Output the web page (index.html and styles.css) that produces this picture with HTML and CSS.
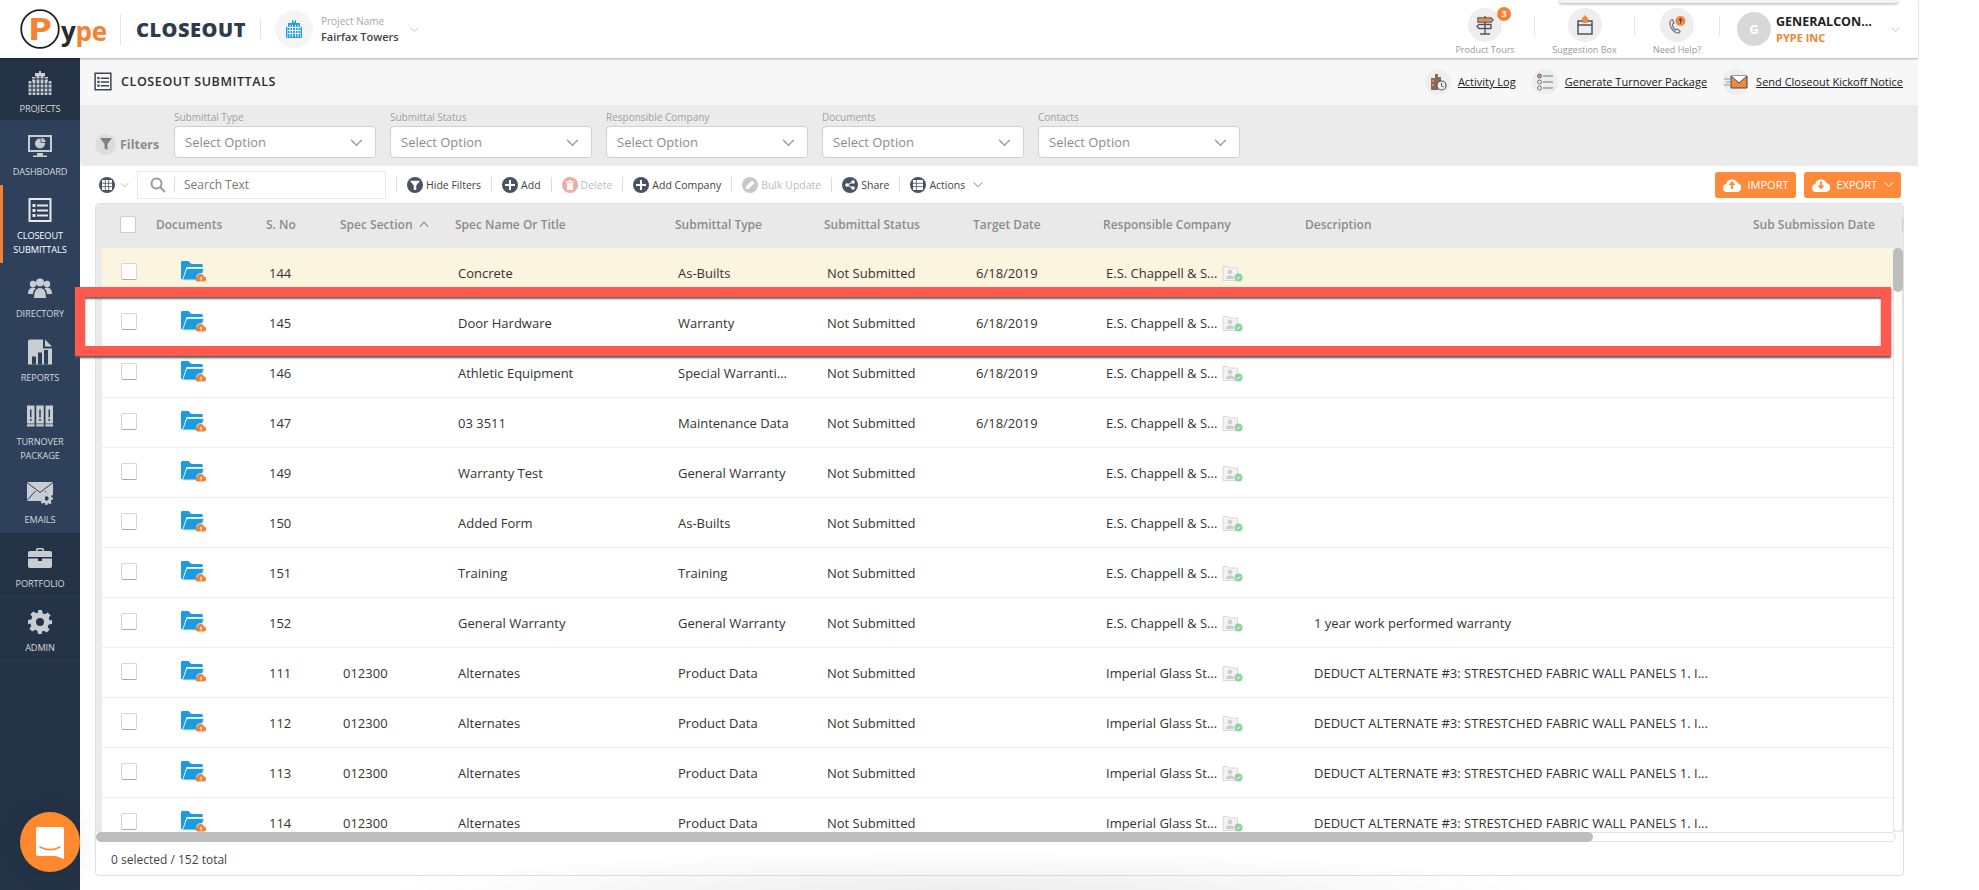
FILE: index.html
```html
<!DOCTYPE html>
<html lang="en">
<head>
<meta charset="utf-8">
<title>Closeout Submittals</title>
<link rel="stylesheet" href="styles.css">
</head>
<body>
<svg class="defs" width="0" height="0" aria-hidden="true">
  <symbol id="folder" viewBox="0 0 26 22">
    <path d="M0 1.500C0 .7.6 0 1.400 0h6l3 3h10c.8 0 1.400.6 1.400 1.400V6H5.500L2 18H0z" fill="#1e9ae0"/>
    <path d="M6.500 7.500H23L19.500 19H1.500L3 15 5 9z" fill="#1e9ae0" stroke="#d3ecfa" stroke-width="1"/>
    <circle cx="20" cy="17" r="5" fill="#fff" fill-opacity=".75"/>
    <path d="M16.500 20.500a2.400 2.400 0 0 1-.4-4.700 3.600 3.600 0 0 1 6.900-.4 2.600 2.600 0 0 1 .3 5.100z" fill="#f47f32"/>
    <path d="M20 15.500l1.500 2h-1v2h-1v-2h-1z" fill="#fff"/>
  </symbol>
  <symbol id="contact" viewBox="0 0 21 17">
    <path d="M1 1.500h5.500L8 3h7.500v12.500H1z" fill="#f3f3f3" stroke="#d8d8d8"/>
    <circle cx="8" cy="7" r="2.300" fill="#cdcdcd"/>
    <path d="M4 14c0-2.700 1.700-3.700 4-3.700s4 1 4 3.700z" fill="#cdcdcd"/>
    <circle cx="16.500" cy="12.500" r="4" fill="#8fd19e"/>
    <path d="M14.700 12.500l1.400 1.400 2.200-2.600" fill="none" stroke="#fff" stroke-width=".9"/>
  </symbol>
  <symbol id="chev" viewBox="0 0 12 8">
    <path d="M1 1.500l5 5 5-5" fill="none" stroke="currentColor" stroke-width="1.200"/>
  </symbol>
  <symbol id="gear" viewBox="0 0 24 24">
    <path fill="currentColor" fill-rule="evenodd" d="M10 0h4l.6 3.300 2.300 1 2.800-1.900 2.900 2.900-1.900 2.800 1 2.300L24 10v4l-3.300.6-1 2.300 1.900 2.800-2.900 2.900-2.800-1.900-2.300 1L14 24h-4l-.6-3.300-2.300-1-2.800 1.900-2.900-2.900 1.900-2.800-1-2.300L0 14v-4l3.300-.6 1-2.300-1.900-2.800 2.900-2.900 2.800 1.900 2.300-1zM12 8a4 4 0 1 0 0 8 4 4 0 0 0 0-8z"/>
  </symbol>
  <symbol id="checklist" viewBox="0 0 24 24">
    <path d="M1.500 1h21v22h-21z" fill="none" stroke="currentColor" stroke-width="2"/>
    <path d="M4.500 6h3v3h-3zM4.500 11h3v3h-3zM4.500 16h3v3h-3z" fill="currentColor"/>
    <path d="M9 7.500h11M9 12.500h11M9 17.500h11" stroke="currentColor" stroke-width="2"/>
  </symbol>
</svg>

<div class="page">
  <header class="topbar">
    <svg class="logo" viewBox="0 0 90 42" aria-label="Pype logo">
      <circle cx="20" cy="21" r="18.800" fill="#fff" stroke="#1f1f1f" stroke-width="1.800"/>
      <text transform="translate(20 32) scale(1.300 1)" text-anchor="middle" class="logo-p">P</text>
      <text x="41" y="33" class="logo-rest"><tspan class="logo-y">y</tspan>pe</text>
    </svg>
    <span class="vline tall"></span>
    <span class="product">CLOSEOUT</span>
    <span class="vline short"></span>
    <span class="project-disc">
      <svg width="18" height="18" viewBox="0 0 18 18"><path fill="#2ba0d6" d="M7 0h1v1.500h2V0h1v3h4v15H3V3h4zM1 7h1.500v11H1zM15.500 7H17v11h-1.500z"/><path stroke="#fff" stroke-width=".9" d="M5 5v12M7.500 5v12M10.500 5v12M13 5v12M3 7.500h12M3 10.500h12M3 13.500h12"/></svg>
    </span>
    <div class="project">
      <span class="project-label">Project Name</span>
      <span class="project-name">Fairfax Towers</span>
    </div>
    <svg class="project-chev"><use href="#chev"/></svg>

    <div class="top-right">
      <div class="help-item w-tours">
        <span class="help-disc">
          <svg width="20" height="20" viewBox="0 0 20 20" fill="none" stroke="#4d5563" stroke-width="1.400"><path d="M10 1v18M5 19h10M3 3h13l2 2-2 2H3zM4 9.500h12v4H4L2 11.500z"/><path d="M3.500 3.500h12l1.500 1.500-1.500 1.500h-12z" fill="#f08a3c" stroke="none"/></svg>
          <span class="badge">3</span>
        </span>
        <span class="help-label">Product Tours</span>
      </div>
      <span class="vline help"></span>
      <div class="help-item w-box">
        <span class="help-disc">
          <svg width="18" height="20" viewBox="0 0 18 20" fill="none" stroke="#4d5563" stroke-width="1.500"><path d="M2 6h14v13H2zM2 10h14"/><path d="M9 0l4 4.500H5z" fill="#f08a3c" stroke="none"/><path d="M6.500 4h5v4h-5z" fill="#f08a3c" stroke="none"/></svg>
        </span>
        <span class="help-label">Suggestion Box</span>
      </div>
      <span class="vline help"></span>
      <div class="help-item w-help">
        <span class="help-disc">
          <svg width="20" height="20" viewBox="0 0 20 20" fill="none"><path d="M3 7c-1 4 3 10 7 11 2 .5 3-1 3-2l-3-2-1.500 1C7 14 5 11 5.500 9L7 8 5.500 4.500C4.500 4.500 3.500 5.500 3 7z" stroke="#6b7280" stroke-width="1.200"/><circle cx="13.500" cy="6" r="5" fill="#f08a3c"/><path d="M13.500 3.500v5M11.500 5.500l2-2 2 2" stroke="#5a3a20" stroke-width="1"/></svg>
        </span>
        <span class="help-label">Need Help?</span>
      </div>
      <span class="vline help"></span>
      <span class="avatar">G</span>
      <div class="user">
        <span class="user-name">GENERALCON...</span>
        <span class="user-org">PYPE INC</span>
      </div>
      <svg class="user-chev"><use href="#chev"/></svg>
    </div>
  </header>

  <div class="main">
    <nav class="sidebar">
      <a class="nav dark first">
        <svg class="nav-ico" width="24" height="24" viewBox="0 0 24 24"><path fill="currentColor" d="M11 0h2v2h4v4h3v4h3.500v14H.5V10H4V6h3V2h4z"/><path stroke="#26354a" stroke-width="1.200" d="M4 10v14M8 5v19M12 5v19M16 5v19M20 10v14M0 13h24M0 17h24M0 21h24M4 8h16"/></svg>
        <span>PROJECTS</span>
      </a>
      <a class="nav">
        <svg class="nav-ico" width="24" height="24" viewBox="0 0 24 24"><path fill="currentColor" d="M0 1h24v17H0zM9 19h6v2.500h4V23H5v-1.500h4z"/><path fill="#2e405a" d="M2 3h20v13H2z"/><circle cx="12" cy="9.500" r="5" fill="currentColor"/><path d="M13 3.500a5 5 0 0 1 5 5h-5z" fill="currentColor" stroke="#2e405a" stroke-width=".8"/></svg>
        <span>DASHBOARD</span>
      </a>
      <a class="nav active">
        <svg class="nav-ico" width="24" height="24"><use href="#checklist"/></svg>
        <span>CLOSEOUT<br>SUBMITTALS</span>
      </a>
      <a class="nav">
        <svg class="nav-ico" width="24" height="20" viewBox="0 0 24 20"><g fill="currentColor"><circle cx="5" cy="6" r="3.200"/><circle cx="19" cy="6" r="3.200"/><path d="M0 16c0-4 2-6.500 5-6.500 1 0 2 .3 2.700 1C5.800 12 5 14 5 16zM24 16c0-4-2-6.500-5-6.500-1 0-2 .3-2.700 1 1.900 1.500 2.700 3.500 2.700 5.500z"/><circle cx="12" cy="4.500" r="4"/><path d="M6 20c0-6 2-10 6-10s6 4 6 10z"/></g></svg>
        <span>DIRECTORY</span>
      </a>
      <a class="nav">
        <svg class="nav-ico" width="24" height="25" viewBox="0 0 24 25"><path fill="currentColor" d="M0 2a2 2 0 0 1 2-2h13v9h9v16H0zM17 0l7 7h-7z"/><path fill="#2e405a" d="M4 17h4v8H4zM10 13h4v12h-4zM16 10.500h4V25h-4z"/></svg>
        <span>REPORTS</span>
      </a>
      <a class="nav">
        <svg class="nav-ico" width="26" height="21" viewBox="0 0 26 21"><g fill="currentColor"><path d="M0 0h7.500v21H0zM9.250 0h7.500v21h-7.500zM18.500 0H26v21h-7.500z"/></g><g fill="#2e405a"><path d="M3 4h1.500v8H3zM12.250 4h1.500v8h-1.500zM21.500 4H23v8h-1.500z"/><circle cx="3.750" cy="14.500" r="1"/><circle cx="13" cy="14.500" r="1"/><circle cx="22.250" cy="14.500" r="1"/><path d="M0 18h7.500v.7H0zM9.250 18h7.500v.7h-7.500zM18.500 18H26v.7h-7.500z"/></g></svg>
        <span>TURNOVER<br>PACKAGE</span>
      </a>
      <a class="nav">
        <svg class="nav-ico" width="26" height="24" viewBox="0 0 26 24"><path fill="currentColor" d="M0 0h26v13h-8v6H0z"/><path fill="none" stroke="#2e405a" stroke-width="1" d="M0 .5l13 10 13-10M0 18.500l8.500-9.500M18 9l8 8"/><use href="#gear" x="13" y="10" width="13" height="13"/></svg>
        <span>EMAILS</span>
      </a>
      <a class="nav dark">
        <svg class="nav-ico" width="24" height="20" viewBox="0 0 24 20"><path fill="currentColor" d="M8 3V1.500C8 .7 8.700 0 9.500 0h5c.8 0 1.500.7 1.500 1.500V3h6a2 2 0 0 1 2 2v4H0V5a2 2 0 0 1 2-2zm1.500 0h5V1.500h-5zM0 10.500h10V13h4v-2.500h10V18a2 2 0 0 1-2 2H2a2 2 0 0 1-2-2z"/></svg>
        <span>PORTFOLIO</span>
      </a>
      <a class="nav dark">
        <svg class="nav-ico" width="24" height="24"><use href="#gear"/></svg>
        <span>ADMIN</span>
      </a>
    </nav>

    <section class="content">
      <div class="titlebar">
        <span class="title-ico"><svg width="18" height="19"><use href="#checklist"/></svg></span>
        <h1>CLOSEOUT SUBMITTALS</h1>
        <div class="title-links">
          <span class="tl-disc"><svg width="18" height="18" viewBox="0 0 18 18"><path d="M2 5h4V1h3v3h3v5H9v8H2z" fill="#8a6a58"/><path d="M3 7h2v2H3zM3 11h2v2H3z" fill="#e88a4a"/><circle cx="12.500" cy="12.500" r="4.500" fill="#eee" stroke="#4d5563" stroke-width="1.200"/><path d="M12.500 10v3l2 1" stroke="#4d5563" fill="none"/></svg></span>
          <a class="tl-link">Activity Log</a>
          <span class="tl-disc"><svg width="16" height="18" viewBox="0 0 16 18" fill="none" stroke="#6b7280"><circle cx="2.500" cy="3" r="2" fill="#e88a4a"/><circle cx="2.500" cy="9" r="2"/><circle cx="2.500" cy="15" r="2"/><path d="M6 3h10M6 9h10M6 15h10"/></svg></span>
          <a class="tl-link">Generate Turnover Package</a>
          <span class="tl-disc"><svg width="24" height="14" viewBox="0 0 24 14"><path d="M7 1h16v12H7z" fill="#ef8a3c" stroke="#3e4654"/><path d="M7 1l8 7 8-7" fill="#fff" stroke="#3e4654"/><path d="M0 4h6M2 7h4M0 10h6" stroke="#8a8f99"/></svg></span>
          <a class="tl-link">Send Closeout Kickoff Notice</a>
        </div>
      </div>

      <div class="filters">
        <div class="filters-lead">
          <span class="filter-disc"><svg width="12" height="12" viewBox="0 0 12 12"><path d="M0 0h12L7.500 6v6l-3-1.500V6z" fill="#808080"/></svg></span>
          <span class="filters-text">Filters</span>
        </div>
        <div class="fgroup"><label>Submittal Type</label><div class="select"><span>Select Option</span><svg class="sel-chev"><use href="#chev"/></svg></div></div>
        <div class="fgroup"><label>Submittal Status</label><div class="select"><span>Select Option</span><svg class="sel-chev"><use href="#chev"/></svg></div></div>
        <div class="fgroup"><label>Responsible Company</label><div class="select"><span>Select Option</span><svg class="sel-chev"><use href="#chev"/></svg></div></div>
        <div class="fgroup"><label>Documents</label><div class="select"><span>Select Option</span><svg class="sel-chev"><use href="#chev"/></svg></div></div>
        <div class="fgroup"><label>Contacts</label><div class="select"><span>Select Option</span><svg class="sel-chev"><use href="#chev"/></svg></div></div>
      </div>

      <div class="toolbar">
        <span class="grid-pick">
          <span class="tdisc"><svg width="10" height="10" viewBox="0 0 10 10"><path d="M0 0h10v10H0z" fill="#fff"/><path d="M3.300 0v10M6.600 0v10M0 3.300h10M0 6.600h10" stroke="#4a5263" stroke-width=".8"/></svg></span>
          <svg class="grid-chev"><use href="#chev"/></svg>
        </span>
        <div class="search">
          <svg width="16" height="16" viewBox="0 0 16 16" fill="none" stroke="#9a9a9a" stroke-width="2"><circle cx="6.500" cy="6.500" r="5"/><path d="M10 10l5 5"/></svg>
          <span class="search-text">Search Text</span>
        </div>
        <i class="tsep"></i>
        <span class="tool"><span class="tdisc"><svg width="10" height="10" viewBox="0 0 12 12"><path d="M0 1h12L7.500 6.500V12h-3V6.500z" fill="#fff"/></svg></span>Hide Filters</span>
        <i class="tsep"></i>
        <span class="tool"><span class="tdisc"><svg width="10" height="10" viewBox="0 0 10 10"><path d="M4 0h2v4h4v2H6v4H4V6H0V4h4z" fill="#fff"/></svg></span>Add</span>
        <i class="tsep"></i>
        <span class="tool off"><span class="tdisc red"><svg width="8" height="10" viewBox="0 0 8 10"><path d="M0 1h8v1.200H0zM1 3h6v7H1zM3 0h2v1H3z" fill="#fff"/></svg></span>Delete</span>
        <i class="tsep"></i>
        <span class="tool"><span class="tdisc"><svg width="10" height="10" viewBox="0 0 10 10"><path d="M4 0h2v4h4v2H6v4H4V6H0V4h4z" fill="#fff"/></svg></span>Add Company</span>
        <i class="tsep"></i>
        <span class="tool off"><span class="tdisc grey"><svg width="10" height="10" viewBox="0 0 10 10"><path d="M7 .5L9.500 3l-6 6H1V6.500z" fill="#fff"/></svg></span>Bulk Update</span>
        <i class="tsep"></i>
        <span class="tool"><span class="tdisc"><svg width="10" height="10" viewBox="0 0 10 10" fill="#fff"><circle cx="8" cy="2" r="1.800"/><circle cx="8" cy="8" r="1.800"/><circle cx="2" cy="5" r="1.800"/><path d="M2 5l6-3M2 5l6 3" stroke="#fff"/></svg></span>Share</span>
        <i class="tsep"></i>
        <span class="tool"><span class="tdisc"><svg width="10" height="10" viewBox="0 0 10 10"><path d="M0 0h10v10H0z" fill="#fff"/><path d="M3.300 0v10M0 3.300h10M0 6.600h10" stroke="#4a5263" stroke-width=".8"/></svg></span>Actions<svg class="act-chev"><use href="#chev"/></svg></span>
        <div class="tool-btns">
          <span class="btn"><svg width="18" height="15" viewBox="0 0 18 15"><path d="M4 15a4 4 0 0 1-.8-7.900 6 6 0 0 1 11.400-1A4.500 4.500 0 0 1 14 15z" fill="#fff"/><path d="M9 4l3.500 4H10v4H8V8H5.500z" fill="#ff8a3a"/></svg>IMPORT</span>
          <span class="btn"><svg width="18" height="15" viewBox="0 0 18 15"><path d="M4 15a4 4 0 0 1-.8-7.900 6 6 0 0 1 11.400-1A4.500 4.500 0 0 1 14 15z" fill="#fff"/><path d="M9 12.500L5.500 8.500H8v-4h2v4h2.500z" fill="#ff8a3a"/></svg>EXPORT<svg class="btn-chev"><use href="#chev"/></svg></span>
        </div>
      </div>

      <div class="card">
        <div class="thead">
          <div class="c-check"><span class="box head-box"></span></div>
          <div>Documents</div>
          <div>S. No</div>
          <div class="sorted">Spec Section<svg class="sort" viewBox="0 0 12 8"><path d="M1 6.500l5-5 5 5" fill="none" stroke="currentColor" stroke-width="1.400"/></svg></div>
          <div>Spec Name Or Title</div>
          <div>Submittal Type</div>
          <div>Submittal Status</div>
          <div>Target Date</div>
          <div>Responsible Company</div>
          <div>Description</div>
          <div class="c-sub">Sub Submission Date</div>
        </div>
        <div class="tbody">
          <div class="rows">
            <div class="row hl"><div class="c-check"><span class="box"></span></div><div class="c-doc"><svg width="26" height="22"><use href="#folder"/></svg></div><div>144</div><div></div><div>Concrete</div><div>As-Builts</div><div>Not Submitted</div><div>6/18/2019</div><div class="c-co">E.S. Chappell &amp; S...<svg width="21" height="17"><use href="#contact"/></svg></div><div class="c-desc"></div></div>
            <div class="row"><div class="c-check"><span class="box"></span></div><div class="c-doc"><svg width="26" height="22"><use href="#folder"/></svg></div><div>145</div><div></div><div>Door Hardware</div><div>Warranty</div><div>Not Submitted</div><div>6/18/2019</div><div class="c-co">E.S. Chappell &amp; S...<svg width="21" height="17"><use href="#contact"/></svg></div><div class="c-desc"></div></div>
            <div class="row"><div class="c-check"><span class="box"></span></div><div class="c-doc"><svg width="26" height="22"><use href="#folder"/></svg></div><div>146</div><div></div><div>Athletic Equipment</div><div>Special Warranti...</div><div>Not Submitted</div><div>6/18/2019</div><div class="c-co">E.S. Chappell &amp; S...<svg width="21" height="17"><use href="#contact"/></svg></div><div class="c-desc"></div></div>
            <div class="row"><div class="c-check"><span class="box"></span></div><div class="c-doc"><svg width="26" height="22"><use href="#folder"/></svg></div><div>147</div><div></div><div>03 3511</div><div>Maintenance Data</div><div>Not Submitted</div><div>6/18/2019</div><div class="c-co">E.S. Chappell &amp; S...<svg width="21" height="17"><use href="#contact"/></svg></div><div class="c-desc"></div></div>
            <div class="row"><div class="c-check"><span class="box"></span></div><div class="c-doc"><svg width="26" height="22"><use href="#folder"/></svg></div><div>149</div><div></div><div>Warranty Test</div><div>General Warranty</div><div>Not Submitted</div><div></div><div class="c-co">E.S. Chappell &amp; S...<svg width="21" height="17"><use href="#contact"/></svg></div><div class="c-desc"></div></div>
            <div class="row"><div class="c-check"><span class="box"></span></div><div class="c-doc"><svg width="26" height="22"><use href="#folder"/></svg></div><div>150</div><div></div><div>Added Form</div><div>As-Builts</div><div>Not Submitted</div><div></div><div class="c-co">E.S. Chappell &amp; S...<svg width="21" height="17"><use href="#contact"/></svg></div><div class="c-desc"></div></div>
            <div class="row"><div class="c-check"><span class="box"></span></div><div class="c-doc"><svg width="26" height="22"><use href="#folder"/></svg></div><div>151</div><div></div><div>Training</div><div>Training</div><div>Not Submitted</div><div></div><div class="c-co">E.S. Chappell &amp; S...<svg width="21" height="17"><use href="#contact"/></svg></div><div class="c-desc"></div></div>
            <div class="row"><div class="c-check"><span class="box"></span></div><div class="c-doc"><svg width="26" height="22"><use href="#folder"/></svg></div><div>152</div><div></div><div>General Warranty</div><div>General Warranty</div><div>Not Submitted</div><div></div><div class="c-co">E.S. Chappell &amp; S...<svg width="21" height="17"><use href="#contact"/></svg></div><div class="c-desc">1 year work performed warranty</div></div>
            <div class="row"><div class="c-check"><span class="box"></span></div><div class="c-doc"><svg width="26" height="22"><use href="#folder"/></svg></div><div>111</div><div>012300</div><div>Alternates</div><div>Product Data</div><div>Not Submitted</div><div></div><div class="c-co">Imperial Glass St...<svg width="21" height="17"><use href="#contact"/></svg></div><div class="c-desc">DEDUCT ALTERNATE #3: STRESTCHED FABRIC WALL PANELS 1. I...</div></div>
            <div class="row"><div class="c-check"><span class="box"></span></div><div class="c-doc"><svg width="26" height="22"><use href="#folder"/></svg></div><div>112</div><div>012300</div><div>Alternates</div><div>Product Data</div><div>Not Submitted</div><div></div><div class="c-co">Imperial Glass St...<svg width="21" height="17"><use href="#contact"/></svg></div><div class="c-desc">DEDUCT ALTERNATE #3: STRESTCHED FABRIC WALL PANELS 1. I...</div></div>
            <div class="row"><div class="c-check"><span class="box"></span></div><div class="c-doc"><svg width="26" height="22"><use href="#folder"/></svg></div><div>113</div><div>012300</div><div>Alternates</div><div>Product Data</div><div>Not Submitted</div><div></div><div class="c-co">Imperial Glass St...<svg width="21" height="17"><use href="#contact"/></svg></div><div class="c-desc">DEDUCT ALTERNATE #3: STRESTCHED FABRIC WALL PANELS 1. I...</div></div>
            <div class="row"><div class="c-check"><span class="box"></span></div><div class="c-doc"><svg width="26" height="22"><use href="#folder"/></svg></div><div>114</div><div>012300</div><div>Alternates</div><div>Product Data</div><div>Not Submitted</div><div></div><div class="c-co">Imperial Glass St...<svg width="21" height="17"><use href="#contact"/></svg></div><div class="c-desc">DEDUCT ALTERNATE #3: STRESTCHED FABRIC WALL PANELS 1. I...</div></div>
          </div>
          <div class="vscroll"><span class="vthumb"></span></div>
        </div>
        <div class="hscroll"><span class="hthumb"></span></div>
        <div class="tfoot">0 selected / 152 total</div>
      </div>
    </section>
  </div>
</div>

<div class="tooltip-edge"></div>
<div class="bottom-glow"></div>
<div class="callout"></div>
<div class="chat">
  <svg width="28" height="32" viewBox="0 0 28 32"><path d="M2 0h24a2 2 0 0 1 2 2v30l-8-3H2a2 2 0 0 1-2-2V2a2 2 0 0 1 2-2z" fill="#fff"/><path d="M4 20c6 3.500 14 3.500 20 0" fill="none" stroke="#ff8a2e" stroke-width="1.600" stroke-linecap="round"/></svg>
</div>
</body>
</html>
```

FILE: styles.css
```css
* { box-sizing: border-box; }
html, body { margin: 0; height: 100%; background: #fff; overflow: hidden; }
body { font-family: "Open Sans", "Liberation Sans", sans-serif; color: #333; position: relative; }
.defs { position: absolute; }
a { color: inherit; }

.page { width: 1918px; height: 890px; display: flex; flex-direction: column; }

/* top bar */
.topbar { height: 58px; flex: none; display: flex; align-items: center; padding-left: 20px; background: #fff; box-shadow: 0 1px 2px rgba(0,0,0,.3); position: relative; z-index: 2; }
.logo { width: 90px; height: 42px; flex: none; overflow: visible; }
.logo-p { font: 700 30px "Open Sans", sans-serif; fill: #f58233; }
.logo-rest { font: 700 26px "Open Sans", sans-serif; fill: #f58233; letter-spacing: -.3px; }
.logo-y { fill: #2a2a2a; }
.vline { display: block; width: 1px; background: #e4e4e4; flex: none; }
.vline.tall { height: 31px; margin-left: 10px; }
.vline.short { height: 20px; margin-left: 14px; }
.product { font-weight: 800; font-size: 20px; letter-spacing: .5px; color: #2e3b4e; margin-left: 15px; width: 110px; white-space: nowrap; }
.project-disc { width: 38px; height: 38px; border-radius: 50%; background: #f5f5f5; display: flex; align-items: center; justify-content: center; margin-left: 14px; flex: none; }
.project { display: flex; flex-direction: column; margin-left: 8px; width: 89px; }
.project-label { font-size: 10px; line-height: 15px; color: #a8a8a8; }
.project-name { font-size: 11px; line-height: 15px; font-weight: 600; color: #444; }
.project-chev { width: 9px; height: 7px; color: #bbb; }
.top-right { margin-left: auto; display: flex; align-items: center; height: 58px; }
.help-item { display: flex; flex-direction: column; align-items: center; position: relative; }
.w-tours { width: 90px; margin-right: 4px; }
.w-box { width: 99px; }
.w-help { width: 84px; }
.help-disc { width: 34px; height: 34px; border-radius: 50%; background: #eee; display: flex; align-items: center; justify-content: center; position: relative; margin-top: 6px; }
.help-label { font-size: 9px; line-height: 15px; color: #999; white-space: nowrap; }
.badge { position: absolute; top: -0.500px; right: -9px; width: 14px; height: 14px; border-radius: 50%; background: #f58233; color: #fff; font-size: 9px; font-weight: 700; line-height: 14px; text-align: center; }
.vline.help { height: 20px; margin-top: -6px; }
.avatar { width: 34px; height: 34px; margin-left: 17px; border-radius: 50%; background: #d8d8d8; color: #fff; font-weight: 700; font-size: 13px; display: flex; align-items: center; justify-content: center; flex: none; }
.user { display: flex; flex-direction: column; margin-left: 5px; width: 115px; }
.user-name { font-size: 12.500px; line-height: 17px; font-weight: 700; color: #222; white-space: nowrap; }
.user-org { font-size: 11px; line-height: 15px; font-weight: 700; color: #f58233; }
.user-chev { width: 9px; height: 7px; color: #bbb; margin-right: 18px; }

/* body layout */
.main { flex: 1; display: flex; min-height: 0; }
.sidebar { width: 80px; flex: none; background: #253347; display: flex; flex-direction: column; }
.nav { display: flex; flex-direction: column; align-items: center; padding: 12px 0 6px; background: #2e405a; color: #c9ccd1; }
.nav.first { padding-bottom: 5px; }
.nav-ico { height: 26px; display: block; margin-bottom: 6px; }
.nav span { display: block; font-size: 9.200px; line-height: 14px; letter-spacing: -.1px; text-align: center; color: #d5d8dc; }
.nav.dark { background: #253347; box-shadow: inset 0 -1px 0 #2e3d52; }
.nav.active { box-shadow: inset 3px 0 0 #f58233; color: #e6e8eb; }
.nav.active span { color: #fff; }

/* content */
.content { flex: 1; min-width: 0; display: flex; flex-direction: column; }
.titlebar { height: 47px; flex: none; display: flex; align-items: center; padding: 0 15px 0 14px; background: #f7f7f7; }
.title-ico { width: 19px; height: 19px; color: #3e4654; display: flex; }
h1 { margin: 0 0 0 8px; font-size: 12.500px; font-weight: 600; letter-spacing: .6px; color: #2c2c2c; }
.title-links { margin-left: auto; display: flex; align-items: center; }
.tl-disc { width: 26px; height: 26px; border-radius: 50%; background: #eee; display: flex; align-items: center; justify-content: center; margin-left: 16px; }
.tl-link { font-size: 11px; color: #222; text-decoration: underline; margin-left: 7px; }

.filters { height: 61px; flex: none; background: #ebebeb; display: flex; padding-top: 5px; border-bottom-left-radius: 4px; }
.filters-lead { width: 94px; flex: none; padding: 12px 0 0 15px; display: flex; align-items: center; align-self: stretch; gap: 4px; height: 56px; }
.filter-disc { width: 21px; height: 21px; border-radius: 50%; background: #dcdcdc; display: flex; align-items: center; justify-content: center; }
.filters-text { font-size: 12.500px; font-weight: 700; color: #8a8a8a; }
.fgroup { width: 202px; margin-right: 14px; }
.fgroup label { display: block; font-size: 10px; line-height: 14px; color: #a0a0a0; margin: 0 0 2px 0; }
.select { height: 32px; background: #fff; border: 1px solid #d0d0d0; border-radius: 4px; display: flex; align-items: center; justify-content: space-between; padding: 0 12px 0 10px; font-size: 13px; color: #8c8c8c; }
.sel-chev { width: 13px; height: 9px; color: #9a9a9a; }

.toolbar { height: 37px; flex: none; display: flex; align-items: center; padding: 0 17px 0 19px; gap: 10px; }
.grid-pick { display: flex; align-items: center; gap: 5px; width: 28px; flex: none; }
.grid-chev { width: 9px; height: 6px; color: #bbb; flex: none; }
.tdisc { width: 16px; height: 16px; flex: none; border-radius: 50%; background: #4a5263; display: inline-flex; align-items: center; justify-content: center; }
.tdisc.red { background: #f3a9a5; }
.tdisc.grey { background: #c8c8c8; }
.search { width: 249px; height: 28px; border: 1px solid #eaeaea; display: flex; align-items: center; padding-left: 12px; flex: none; }
.search-text { font-size: 12px; color: #777; border-left: 1px solid #ddd; margin-left: 8px; padding-left: 9px; line-height: 16px; }
.tsep { width: 1px; height: 15px; background: #ddd; flex: none; }
.tool { display: flex; align-items: center; gap: 3px; font-size: 10.500px; color: #444; white-space: nowrap; }
.tool.off { color: #bbb; }
.act-chev { width: 12px; height: 7px; color: #aaa; margin-left: 4px; }
.tool-btns { margin-left: auto; display: flex; gap: 8px; }
.btn { height: 26px; padding: 0 7px 0 8px; background: #ff8a3a; border-radius: 3px; color: #fff; font-size: 11px; display: flex; align-items: center; gap: 7px; }
.btn-chev { width: 10px; height: 7px; color: #fff; }

/* table */
.card { flex: none; width: 1809px; height: 673px; margin-left: 15px; border: 1px solid #e0e0e0; border-radius: 4px; display: flex; flex-direction: column; overflow: hidden; }
.thead, .row { display: grid; grid-template-columns: 54px 110px 74px 115px 220px 149px 149px 130px 202px 448px 1fr; align-items: center; }
.thead { height: 44px; flex: none; background: #e9e9e9; padding: 0 0 4px 6px; font-size: 12px; font-weight: 600; color: #8c8c8c; white-space: nowrap; }
.c-check { padding-left: 18px; display: flex; }
.box { width: 16px; height: 17px; background: #fff; border: 1px solid #d4d4d4; border-bottom-color: #aaa; border-radius: 2px; display: block; }
.head-box { border-color: #ccc; }
.sorted { display: flex; align-items: center; gap: 6px; }
.sort { width: 10px; height: 7px; color: #888; }
.c-sub { border-right: 1px solid #ccc; line-height: 13px; }
.tbody { height: 584px; flex: none; display: flex; background: #ebebeb; }
.rows { flex: 1; margin-left: 6px; overflow: hidden; background: #fff; }
.row { height: 50px; border-bottom: 1px solid #eee; font-size: 13px; color: #333; background: #fff; white-space: nowrap; padding-bottom: 2px; }
.row > div { padding: 3px 0 0 3px; }
.row > .c-check { padding: 0 0 0 19px; }
.row > .c-doc { padding: 0 0 0 25px; display: flex; }
.row.hl { background: #fbf4de; }
.row > .c-co { display: flex; align-items: center; gap: 5px; padding-left: 3px; }
.row > .c-co svg { margin-top: 0; }
.row > .c-desc { padding-left: 9px; }
.vscroll { width: 10px; flex: none; background: #fff; border: 1px solid #e2e2e2; border-radius: 5px; }
.vthumb { display: block; width: 10px; height: 44px; margin: -1px; background: #bdbdbd; border-radius: 5px; }
.hscroll { height: 10px; flex: none; margin-right: 7px; background: #fff; border: 1px solid #e2e2e2; border-radius: 5px; }
.hthumb { display: block; height: 10px; margin: -1px; width: 1497px; background: #bdbdbd; border-radius: 5px; }
.tfoot { flex: 1; display: flex; align-items: center; padding: 2px 0 0 15px; font-size: 12px; color: #444; }

/* overlays */
.tooltip-edge { position: absolute; left: 1559px; top: 0; width: 339px; height: 3px; background: #f4f4f4; border-radius: 0 0 5px 5px; box-shadow: 0 1px 3px rgba(0,0,0,.35); z-index: 3; }
.bottom-glow { position: absolute; left: 380px; width: 1170px; top: 850px; height: 40px; background: radial-gradient(50% 100% at 50% 100%, rgba(0,0,0,.07), rgba(0,0,0,0)); pointer-events: none; }
.callout { position: absolute; left: 75px; top: 287px; width: 1816px; height: 69px; border: 10px solid #ff5a4d; box-shadow: 0 2px 2px #555, inset 0 2px 2px #666; z-index: 4; }
.chat { position: absolute; left: 20px; top: 812px; width: 60px; height: 60px; border-radius: 50%; background: #ff8a2e; display: flex; align-items: center; justify-content: center; box-shadow: 0 1px 30px rgba(0,0,0,.08); z-index: 5; padding-top: 2px; }
```
